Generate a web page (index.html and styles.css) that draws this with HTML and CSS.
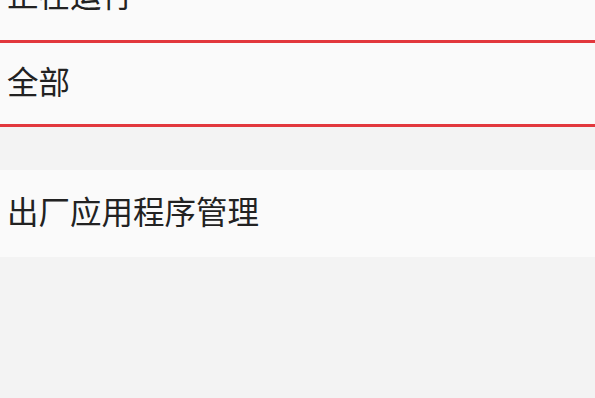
FILE: index.html
```html
<!DOCTYPE html>
<html lang="zh-CN">
<head>
<meta charset="utf-8">
<link rel="stylesheet" href="styles.css">
</head>
<body>
<div class="list">
  <div class="row">正在运行</div>
  <div class="row selected">全部</div>
</div>
<div class="list second">
  <div class="row">出厂应用程序管理</div>
</div>
</body>
</html>
```
FILE: styles.css
```css
html, body {
  margin: 0;
  padding: 0;
  background: #f3f3f3;
  overflow: hidden;
}
body {
  width: 595px;
  height: 398px;
  font-family: "Noto Sans CJK SC", "Noto Sans", sans-serif;
  color: #222222;
}
.list {
  display: flex;
  flex-direction: column;
}
.list:first-child {
  margin-top: -47px;
}
.second {
  margin-top: 43px;
}
.row {
  height: 87px;
  box-sizing: border-box;
  display: flex;
  align-items: center;
  padding-left: 7px;
  padding-bottom: 5px;
  background: #fafafa;
  font-size: 31.5px;
  line-height: 1;
}
.selected {
  border-top: 3px solid #e2383d;
  border-bottom: 3px solid #e2383d;
}
```
